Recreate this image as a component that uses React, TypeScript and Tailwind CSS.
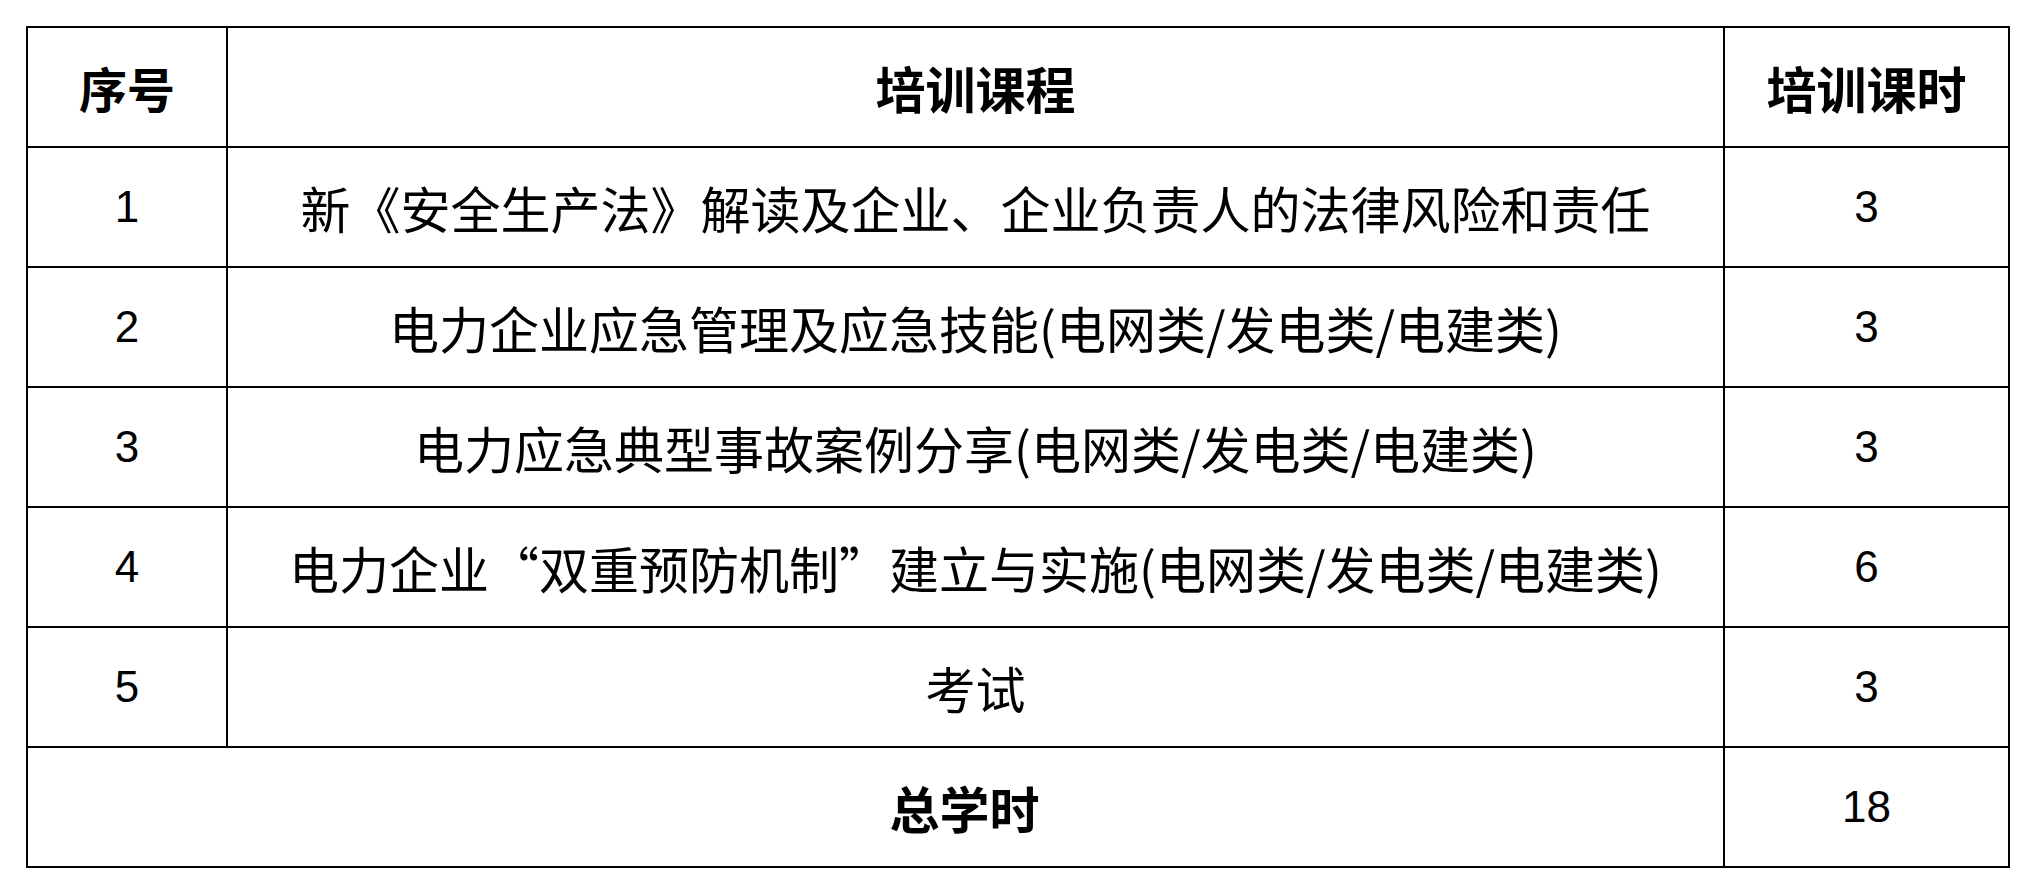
const rows = [
  { no: "1", course: "新《安全生产法》解读及企业、企业负责人的法律风险和责任", hours: "3" },
  { no: "2", course: "电力企业应急管理及应急技能(电网类/发电类/电建类)", hours: "3" },
  { no: "3", course: "电力应急典型事故案例分享(电网类/发电类/电建类)", hours: "3" },
  { no: "4", course: "电力企业“双重预防机制”建立与实施(电网类/发电类/电建类)", hours: "6" },
  { no: "5", course: "考试", hours: "3" },
]

export default function App() {
  return (
    <main className="bg-white min-h-screen w-[2029px] h-[893px] pt-[26px] pl-[26px] font-['Noto_Sans_CJK_SC',sans-serif] text-black">
      <table className="table-fixed border-collapse border-2 border-black w-[1982px]">
        <colgroup>
          <col className="w-[200px]" />
          <col className="w-[1497px]" />
          <col className="w-[285px]" />
        </colgroup>
        <thead>
          <tr className="h-[120px]">
            <th className="border-2 border-black text-[48px] font-bold text-center">序号</th>
            <th className="border-2 border-black text-[50px] font-bold text-center">培训课程</th>
            <th className="border-2 border-black text-[50px] font-bold text-center">培训课时</th>
          </tr>
        </thead>
        <tbody>
          {rows.map((r) => (
            <tr key={r.no} className="h-[120px]">
              <td className="border-2 border-black text-center text-[44px] font-['Liberation_Sans',sans-serif]">{r.no}</td>
              <td className="border-2 border-black text-center text-[50px]">{r.course}</td>
              <td className="border-2 border-black text-center text-[44px] font-['Liberation_Sans',sans-serif]">{r.hours}</td>
            </tr>
          ))}
          <tr className="h-[120px]">
            <td colSpan={2} className="border-2 border-black text-center text-[50px] font-bold pl-[178px]">总学时</td>
            <td className="border-2 border-black text-center text-[44px] font-['Liberation_Sans',sans-serif]">18</td>
          </tr>
        </tbody>
      </table>
    </main>
  )
}
